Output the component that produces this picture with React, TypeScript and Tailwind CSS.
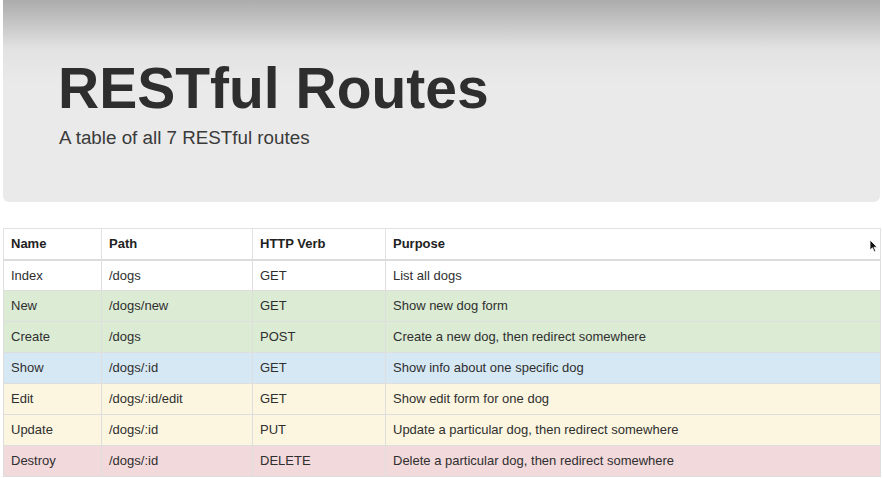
const routes = [
  { name: "Index", path: "/dogs", verb: "GET", purpose: "List all dogs", tone: "bg-white" },
  { name: "New", path: "/dogs/new", verb: "GET", purpose: "Show new dog form", tone: "bg-[#dbebd4]" },
  { name: "Create", path: "/dogs", verb: "POST", purpose: "Create a new dog, then redirect somewhere", tone: "bg-[#dbebd4]" },
  { name: "Show", path: "/dogs/:id", verb: "GET", purpose: "Show info about one specific dog", tone: "bg-[#d6e8f4]" },
  { name: "Edit", path: "/dogs/:id/edit", verb: "GET", purpose: "Show edit form for one dog", tone: "bg-[#fcf6e0]" },
  { name: "Update", path: "/dogs/:id", verb: "PUT", purpose: "Update a particular dog, then redirect somewhere", tone: "bg-[#fcf6e0]" },
  { name: "Destroy", path: "/dogs/:id", verb: "DELETE", purpose: "Delete a particular dog, then redirect somewhere", tone: "bg-[#f2d9db]" },
];

const App = () => {
  return (
    <div className="w-[883px] h-[478px] overflow-hidden bg-white font-['Liberation_Sans',Arial,sans-serif] text-[#333]">
      {/* Jumbotron */}
      <div className="relative mx-[3px] h-[202px] rounded-b-md bg-[#eaeaea] bg-gradient-to-b from-[#acacac] via-[#e2e2e2] via-[24%] to-[#eaeaea] to-[42%] pt-[60px] pl-[55px]">
        <h1 className="text-[57px] leading-[57px] font-bold text-[#2e2e2e]">RESTful Routes</h1>
        <p className="mt-[11px] ml-[1px] text-[18.8px] leading-[19px] text-[#3a3a3a]">A table of all 7 RESTful routes</p>
      </div>

      {/* Table */}
      <div className="relative mt-[26px] mx-[3px]">
        <table className="w-[878px] border-collapse text-[13px] table-fixed text-[#2f2f2f]">
          <colgroup>
            <col className="w-[98px]" />
            <col className="w-[151px]" />
            <col className="w-[133px]" />
            <col />
          </colgroup>
          <thead>
            <tr className="h-[31px] bg-white border-b-2 border-[#dcdcdc]">
              <th className="text-left font-bold px-[7px] border border-[#e2e2e2] text-[#222]">Name</th>
              <th className="text-left font-bold px-[7px] border border-[#e2e2e2] text-[#222]">Path</th>
              <th className="text-left font-bold px-[7px] border border-[#e2e2e2] text-[#222]">HTTP Verb</th>
              <th className="text-left font-bold px-[7px] border border-[#e2e2e2] text-[#222]">Purpose</th>
            </tr>
          </thead>
          <tbody>
            {routes.map((r) => (
              <tr key={r.name} className={`h-[31px] ${r.tone}`}>
                <td className="px-[7px] border border-[#dedede]">{r.name}</td>
                <td className="px-[7px] border border-[#dedede]">{r.path}</td>
                <td className="px-[7px] border border-[#dedede]">{r.verb}</td>
                <td className="px-[7px] border border-[#dedede]">{r.purpose}</td>
              </tr>
            ))}
          </tbody>
        </table>

        {/* mouse pointer */}
        <svg className="absolute left-[866px] top-[11px]" width="9" height="14" viewBox="0 0 9 14">
          <path d="M1 1 L1 11 L3.5 8.8 L5.3 12.8 L6.8 12.1 L5 8.2 L8.2 8.2 Z" fill="#111" stroke="#fff" strokeWidth="0.8" />
        </svg>
      </div>
    </div>
  );
};

export default App;
